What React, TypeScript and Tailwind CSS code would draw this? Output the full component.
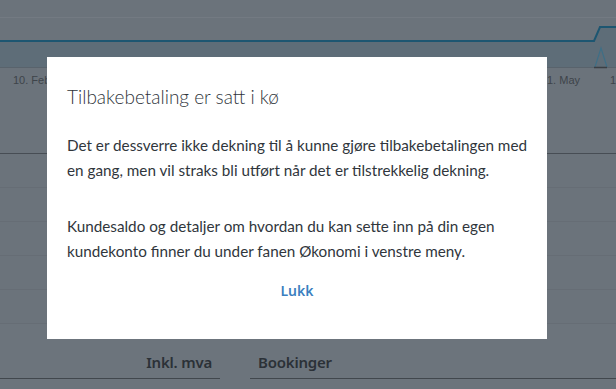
import React from "react";

const rows = [0, 1, 2, 3, 4];

const Chart: React.FC = () => (
  <svg width={616} height={72} viewBox="0 0 616 72" className="block">
    <line x1={0} y1={17.5} x2={616} y2={17.5} stroke="#737a82" strokeWidth={1} />
    <path d="M0 41 L594 41 L600 27 L616 27 L616 67 L0 67 Z" fill="#5e6d78" />
    <path d="M0 41 L594 41 L600 27 L616 27" fill="none" stroke="#1d5671" strokeWidth={2} />
    <path d="M595 67 L601 48 L607 67" fill="none" stroke="#3f6f86" strokeWidth={1.2} />
    <line x1={0} y1={67.5} x2={616} y2={67.5} stroke="#59636c" strokeWidth={1} />
    <line x1={594} y1={67.5} x2={607} y2={67.5} stroke="#3a3f44" strokeWidth={1.5} />
  </svg>
);

export default function App() {
  return (
    <div className="relative h-[389px] w-[616px] overflow-hidden bg-[#6b737b] font-['Lato',sans-serif]">
      {/* page under the overlay */}
      <div className="flex h-[153px] flex-col">
        <Chart />
        <div className="relative h-[20px] font-['Liberation_Sans',Arial,sans-serif] text-[11px] text-[#3e444a]">
          <span className="absolute left-[13px] top-0">10. Feb</span>
          <span className="absolute left-[547px] top-0">1. May</span>
          <span className="absolute left-[610px] top-0">1</span>
        </div>
      </div>
      <div className="border-t border-[#474d54]">
        {rows.map((r) => (
          <div key={r} className="h-[34px] border-b border-[#666d75]" />
        ))}
      </div>
      <div className="flex h-[66px] items-start bg-[#6c747c] pt-[26px]">
        <div className="flex h-[29px] w-[220px] justify-end border-b border-[#41474d] pr-[8px]">
          <span className="font-['Noto_Sans',sans-serif] text-[15px] font-semibold leading-[24px] tracking-[-0.2px] text-[#2b3137]">
            Inkl. mva
          </span>
        </div>
        <div className="ml-[30px] h-[29px] flex-1 border-b border-[#41474d] pl-[8px]">
          <span className="font-['Noto_Sans',sans-serif] text-[15px] font-semibold leading-[24px] tracking-[-0.2px] text-[#2b3137]">
            Bookinger
          </span>
        </div>
      </div>

      {/* modal */}
      <div className="absolute left-[47px] top-[57px] flex h-[282px] w-[500px] flex-col bg-white px-[20px] pt-[28px]">
        <h2 className="text-[19px] font-light leading-[24px] text-[#2f353b]">
          Tilbakebetaling er satt i kø
        </h2>
        <p className="mt-[24px] text-[15.25px] leading-[25px] text-[#30363c]">
          Det er dessverre ikke dekning til å kunne gjøre tilbakebetalingen med en gang, men vil straks bli utført når det er tilstrekkelig dekning.
        </p>
        <p className="mt-[31px] text-[15.25px] leading-[25px] text-[#30363c]">
          Kundesaldo og detaljer om hvordan du kan sette inn på din egen kundekonto finner du under fanen Økonomi i venstre meny.
        </p>
        <div className="mt-[17px] flex justify-center">
          <button className="font-['Noto_Sans',sans-serif] text-[14px] font-semibold leading-[20px] text-[#3b7fc0]">
            Lukk
          </button>
        </div>
      </div>
    </div>
  );
}
